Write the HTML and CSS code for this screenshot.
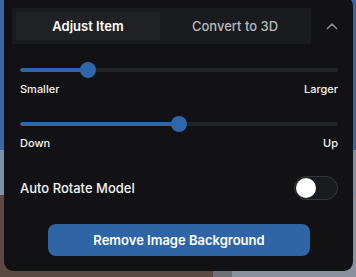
FILE: index.html
```html
<!DOCTYPE html>
<html>
<head>
<meta charset="utf-8">
<link rel="stylesheet" href="styles.css">
</head>
<body>
<div class="scene">
  <div class="panel">
    <div class="tabrow">
      <div class="tabs">
        <div class="tab active">Adjust Item</div>
        <div class="tab">Convert to 3D</div>
      </div>
      <div class="collapse">
        <svg width="12" height="8" viewBox="0 0 12 8"><path d="M1.5 6.5 L6 2 L10.5 6.5" fill="none" stroke="#8a8b90" stroke-width="1.6" stroke-linecap="round" stroke-linejoin="round"/></svg>
      </div>
    </div>

    <div class="slider s1">
      <div class="track"><div class="fill" style="width:68px"></div></div>
      <div class="thumb" style="left:68px"></div>
    </div>
    <div class="labels"><span>Smaller</span><span>Larger</span></div>

    <div class="slider s2">
      <div class="track"><div class="fill" style="width:159px"></div></div>
      <div class="thumb" style="left:159px"></div>
    </div>
    <div class="labels"><span>Down</span><span>Up</span></div>

    <div class="toggle-row">
      <span class="toggle-label">Auto Rotate Model</span>
      <div class="switch"><div class="knob"></div></div>
    </div>

    <div class="btn-row">
      <button class="btn">Remove Image Background</button>
    </div>
  </div>
</div>
</body>
</html>
```
FILE: styles.css
```css
html, body {
  margin: 0;
  padding: 0;
}
body {
  width: 356px;
  height: 277px;
  overflow: hidden;
  font-family: Inter, "Noto Sans", sans-serif;
  background:
    linear-gradient(to right, #5d4944 0 213px, #6e6f78 213px 232px, #8a909c 232px) 0 195px / 100% 82px no-repeat,
    linear-gradient(to bottom, #3a66a5 0 150px, #7f8fa4 150px 195px) 0 0 / 100% 195px no-repeat,
    #3a66a5;
}
.scene {
  padding-left: 4px;
}
.panel {
  box-sizing: border-box;
  width: 349px;
  height: 275px;
  margin-top: -4px;
  background: #121215;
  border-radius: 0 10px 9px 9px;
  padding: 12px 15px 15px 8px;
  display: flex;
  flex-direction: column;
}
.tabrow {
  display: flex;
  align-items: center;
}
.tabs {
  box-sizing: border-box;
  width: 302px;
  height: 36px;
  padding: 4px;
  background: #1a1b1e;
  border-radius: 2px;
  display: flex;
  gap: 3px;
}
.tab {
  flex: 1;
  display: flex;
  align-items: center;
  justify-content: center;
  font-size: 13px;
  font-weight: 500;
  color: #b9babd;
  border-radius: 2px;
}
.tab.active {
  background: #202125;
  color: #ffffff;
  font-weight: 600;
}
.collapse {
  display: flex;
  align-items: center;
  padding-left: 15px;
}
.collapse svg {
  display: block;
}
.slider {
  position: relative;
  height: 16px;
  margin-left: 8px;
  width: 318px;
}
.s1 { margin-top: 18px; }
.s2 { margin-top: 20px; }
.track {
  position: absolute;
  left: 0;
  right: 0;
  top: 6px;
  height: 4px;
  border-radius: 2px;
  background: #232428;
  overflow: hidden;
}
.fill {
  height: 100%;
  background: #2f66a8;
  border-radius: 2px;
}
.thumb {
  position: absolute;
  top: 0;
  width: 16px;
  height: 16px;
  margin-left: -8px;
  border-radius: 50%;
  background: #2f67aa;
}
.labels {
  margin: 4px 0 0 8px;
  width: 318px;
  display: flex;
  justify-content: space-between;
  font-size: 11px;
  line-height: 14px;
  color: #f2f2f3;
  font-weight: 500;
}
.toggle-row {
  margin: 26px 0 0 8px;
  width: 318px;
  display: flex;
  justify-content: space-between;
  align-items: center;
}
.toggle-label {
  font-size: 13px;
  font-weight: 500;
  color: #f2f2f3;
}
.switch {
  box-sizing: border-box;
  width: 44px;
  height: 24px;
  border-radius: 12px;
  background: #1a1b1e;
  border: 1px solid #35363a;
  padding: 1px;
}
.knob {
  width: 20px;
  height: 20px;
  border-radius: 50%;
  background: #ffffff;
}
.btn-row {
  margin-top: 24px;
  display: flex;
  padding-left: 36px;
}
.btn {
  width: 262px;
  height: 32px;
  border: none;
  border-radius: 8px;
  background: #2f65a6;
  color: #ffffff;
  font-family: Inter, "Noto Sans", sans-serif;
  font-size: 13px;
  font-weight: 600;
  padding: 0;
}
```
